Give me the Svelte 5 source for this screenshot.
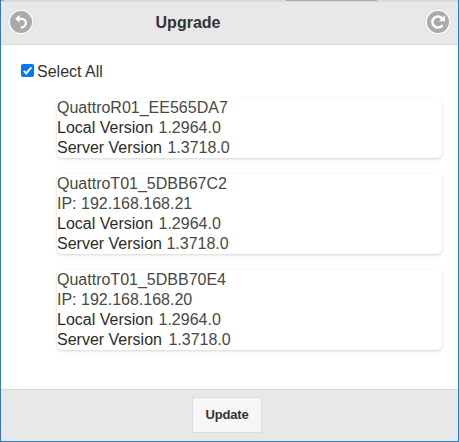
<script>
  let selectAll = $state(true);
  const devices = [
    { name: 'QuattroR01_EE565DA7', ip: '', local: '1.2964.0', server: '1.3718.0', gap: 1 },
    { name: 'QuattroT01_5DBB67C2', ip: '192.168.168.21', local: '1.2964.0', server: '1.3718.0', gap: 0 },
    { name: 'QuattroT01_5DBB70E4', ip: '192.168.168.20', local: '1.2964.0', server: '1.3718.0', gap: 2 }
  ];
</script>

<div class="page">
  <header>
    <button class="round" aria-label="Back">
      <svg viewBox="0 0 22 22" width="22" height="22">
        <circle cx="11" cy="11" r="11" fill="#aaa" />
        <path d="M5 7.8 9.6 4v7.4z" fill="#fff" />
        <path d="M8.6 7.8h3c2.4 0 4.3 1.8 4.3 4.2s-1.9 4.6-5.2 4.6" fill="none" stroke="#fff" stroke-width="2.3" />
      </svg>
    </button>
    <h1>Upgrade</h1>
    <button class="round" aria-label="Refresh">
      <svg viewBox="0 0 22 22" width="22" height="22">
        <circle cx="11" cy="11" r="11" fill="#aaa" />
        <path d="M15.3 7.4A5.6 5.6 0 1 0 15.6 14.2" fill="none" stroke="#fff" stroke-width="2.5" />
        <path d="M18 4.2v6h-6z" fill="#fff" />
      </svg>
    </button>
  </header>

  <main>
    <label>
      <input type="checkbox" bind:checked={selectAll} />
      <span class="box">
        {#if selectAll}
          <svg viewBox="0 0 13 13" width="13" height="13"><path d="M2.8 6.9 5.2 9.4 10.3 3.3" fill="none" stroke="#fff" stroke-width="2" /></svg>
        {/if}
      </span>
      <span>Select All</span>
    </label>
    <div class="list">
      {#each devices as d}
        <section>
          <div>{d.name}</div>
          {#if d.ip}<div>IP: {d.ip}</div>{/if}
          <div><span class="term local">Local Version</span> {d.local}</div>
          <div><span class="term" style="margin-right: {d.gap}px">Server Version</span> {d.server}</div>
        </section>
      {/each}
    </div>
  </main>

  <footer><button class="update">Update</button></footer>
</div>

<style>
  :global(body) { margin: 0; }
  .page {
    box-sizing: border-box;
    width: 459px;
    height: 442px;
    display: flex;
    flex-direction: column;
    border: 1px solid #3b78ae;
    border-right-color: #2680c2;
    border-top: 0;
    background: #fff;
    font: 16px/20px "Liberation Sans", Arial, sans-serif;
    color: #484848;
  }
  header {
    box-sizing: border-box;
    height: 45px;
    flex: none;
    display: flex;
    align-items: center;
    justify-content: space-between;
    padding: 0 6px;
    border-bottom: 1px solid #dadada;
    background:
      linear-gradient(#aaa, #aaa) 285px 0 / 91px 1px no-repeat,
      linear-gradient(#aaa, #aaa) 0 0 / 3px 1px no-repeat,
      linear-gradient(#dadadc, #dadadc) 0 0 / 100% 2px no-repeat,
      #e8e8e8;
  }
  h1 {
    margin: 0;
    padding: 2px 83px 0 0;
    font-size: 16px;
    line-height: 20px;
    color: #333;
  }
  .round {
    box-sizing: border-box;
    width: 28px;
    height: 28px;
    padding: 2px;
    border: 1px solid #ddd;
    border-radius: 50%;
    background: #f6f6f6;
  }
  svg { display: block; }
  .round svg { margin: 0 auto; }
  main {
    flex: 1;
    padding: 17px 16px 0 20px;
  }
  label {
    display: flex;
    align-items: center;
    gap: 3px;
    height: 20px;
    color: #333;
  }
  input {
    position: absolute;
    opacity: 0;
    pointer-events: none;
  }
  .box {
    width: 13px;
    height: 13px;
    margin-bottom: 3px;
    border-radius: 2px;
    background: #0075ff;
  }
  .list {
    display: flex;
    flex-direction: column;
    gap: 16px;
    padding: 16px 0 0 36px;
  }
  section {
    border-radius: 5px;
    box-shadow: 0 1px 3px rgba(0, 0, 0, 0.18);
  }
  section div { height: 20px; white-space: nowrap; }
  .term { color: #2b2b2b; }
  .local { margin-right: 1px; }
  footer {
    box-sizing: border-box;
    height: 52px;
    flex: none;
    padding-top: 7px;
    border-top: 1px solid #d9d9d9;
    border-bottom: 1px solid #d4eefa;
    background: #e8e8e8;
    text-align: center;
  }
  .update {
    box-sizing: border-box;
    width: 70px;
    height: 36px;
    margin-right: 5px;
    padding: 0;
    border: 1px solid #ddd;
    background: #f6f6f6;
    color: #333;
    font: bold 13px/20px "Liberation Sans", Arial, sans-serif;
    letter-spacing: -0.2px;
  }
</style>
